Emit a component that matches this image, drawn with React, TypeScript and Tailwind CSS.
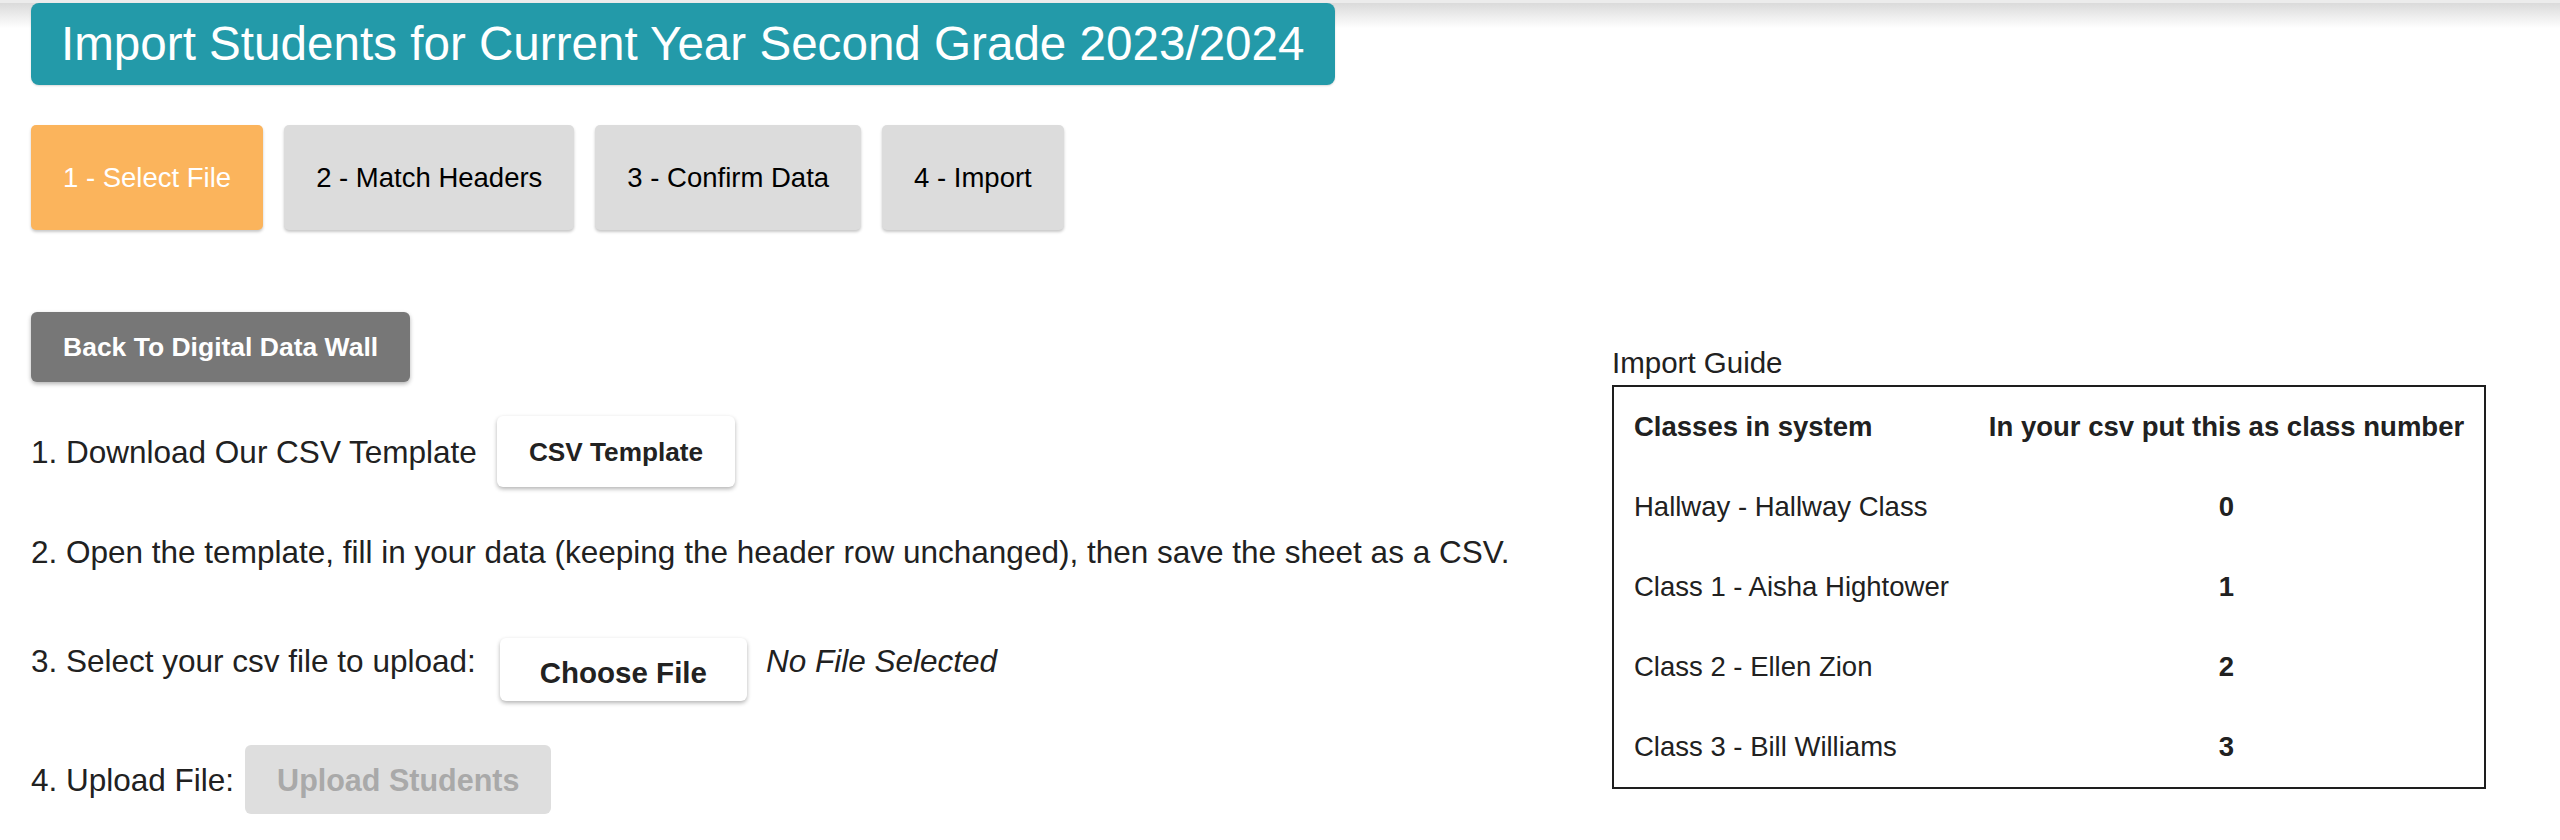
import type { ReactNode } from 'react';

const STEPS = [
  { id: 1, label: '1 - Select File', active: true },
  { id: 2, label: '2 - Match Headers', active: false },
  { id: 3, label: '3 - Confirm Data', active: false },
  { id: 4, label: '4 - Import', active: false },
];

const CLASSES = [
  { name: 'Hallway - Hallway Class', num: 0 },
  { name: 'Class 1 - Aisha Hightower', num: 1 },
  { name: 'Class 2 - Ellen Zion', num: 2 },
  { name: 'Class 3 - Bill Williams', num: 3 },
];

function StepButton({ label, active }: { label: string; active: boolean }) {
  return (
    <div
      className={
        active
          ? 'flex h-[105px] items-center rounded-[5px] bg-[#fbb45c] px-[32px] text-[27.5px] text-white shadow-[0_2px_3px_rgba(0,0,0,0.22)]'
          : 'flex h-[105px] items-center rounded-[5px] bg-[#dcdcdc] px-[32px] text-[27.5px] text-black shadow-[0_2px_3px_rgba(0,0,0,0.22)]'
      }
    >
      {label}
    </div>
  );
}

function Line({ children, className }: { children: ReactNode; className?: string }) {
  return <div className={`flex items-center ${className ?? ''}`}>{children}</div>;
}

export default function App() {
  return (
    <div
      className="relative min-h-[840px] bg-white text-[#212121]"
      style={{ fontFamily: '"Liberation Sans", Arial, Helvetica, sans-serif' }}
    >
      {/* app bar shadow peeking at the top */}
      <div className="absolute inset-x-0 top-0 h-[28px] border-t-[3px] border-[#ececec] bg-gradient-to-b from-[#dadada] to-white" />

      <div className="relative pl-[31px] pt-[3px]">
        <div className="inline-flex h-[82px] items-center rounded-[8px] bg-[#239aa9] px-[30px] text-[47.6px] leading-none text-white shadow-[0_1px_2px_rgba(0,0,0,0.15)]">
          Import Students for Current Year Second Grade 2023/2024
        </div>

        <div className="mt-[40px] flex gap-[21px]">
          {STEPS.map((s) => (
            <StepButton key={s.id} label={s.label} active={s.active} />
          ))}
        </div>

        <div className="mt-[82px] flex">
          <div className="flex-1 text-[31.5px] leading-[36px]">
            <button className="h-[70px] rounded-[6px] bg-[#777777] px-[32px] text-[26.5px] font-bold text-white shadow-[0_2px_4px_rgba(0,0,0,0.3)]">
              Back To Digital Data Wall
            </button>

            <Line className="mt-[34px]">
              <span>1. Download Our CSV Template</span>
              <button className="ml-[20px] h-[71px] rounded-[6px] bg-white px-[32px] text-[26.2px] font-bold text-[#222] shadow-[0_2px_4px_rgba(0,0,0,0.3)]">
                CSV Template
              </button>
            </Line>

            <div className="mt-[47px]">
              2. Open the template, fill in your data (keeping the header row unchanged), then save the sheet as a CSV.
            </div>

            <div className="mt-[68px] flex items-start">
              <span className="mt-[5px]">3. Select your csv file to upload:</span>
              <button className="ml-[24px] h-[63px] rounded-[6px] bg-white px-[40px] pt-[6px] text-[29.5px] font-bold text-[#222] shadow-[0_2px_4px_rgba(0,0,0,0.3)]">
                Choose File
              </button>
              <span className="ml-[19px] mt-[5px] italic">No File Selected</span>
            </div>

            <Line className="mt-[44px]">
              <span>4. Upload File:</span>
              <button
                disabled
                className="ml-[11px] h-[69px] rounded-[6px] bg-[#dedede] px-[32px] text-[30.5px] font-bold text-[#a9a9a9]"
              >
                Upload Students
              </button>
            </Line>
          </div>

          <div className="mr-[76px] w-[872px] pt-[34px]">
            <div className="text-[29.5px] leading-[34px]">Import Guide</div>
            <div className="mt-[5px] inline-block border-2 border-[#1e1e1e]">
              <table className="border-collapse whitespace-nowrap text-[27.5px] leading-[32px]">
                <thead>
                  <tr>
                    <th className="px-[20px] py-[24px] text-left font-bold">Classes in system</th>
                    <th className="px-[20px] py-[24px] text-center font-bold">
                      In your csv put this as class number
                    </th>
                  </tr>
                </thead>
                <tbody>
                  {CLASSES.map((c) => (
                    <tr key={c.num}>
                      <td className="px-[20px] py-[24px] text-left">{c.name}</td>
                      <td className="px-[20px] py-[24px] text-center font-bold">{c.num}</td>
                    </tr>
                  ))}
                </tbody>
              </table>
            </div>
          </div>
        </div>
      </div>
    </div>
  );
}
